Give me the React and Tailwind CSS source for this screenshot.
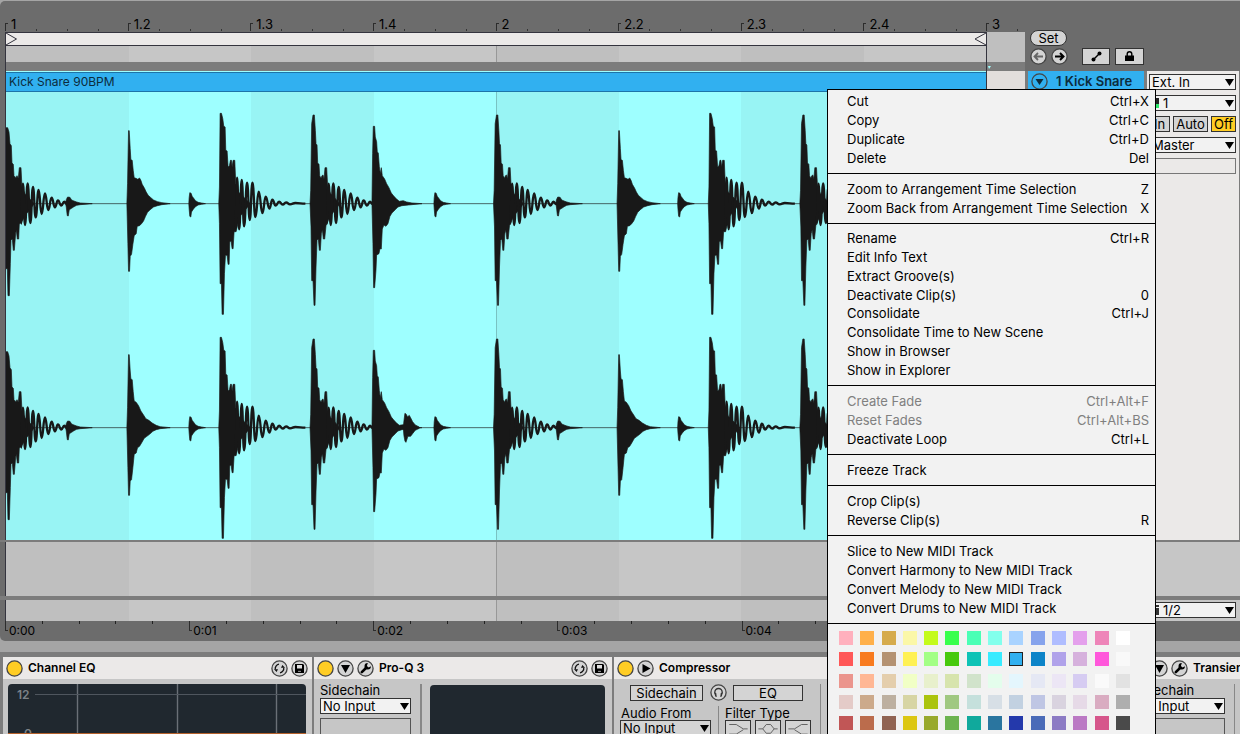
// App.jsx
import { useState } from "react";

const BEATS = ["1", "1.2", "1.3", "1.4", "2", "2.2", "2.3", "2.4"];
const SECONDS = ["0:00", "0:01", "0:02", "0:03", "0:04"];

const MENU = [
  [
    ["Cut", "Ctrl+X"],
    ["Copy", "Ctrl+C"],
    ["Duplicate", "Ctrl+D"],
    ["Delete", "Del"],
  ],
  [
    ["Zoom to Arrangement Time Selection", "Z"],
    ["Zoom Back from Arrangement Time Selection", "X"],
  ],
  [
    ["Rename", "Ctrl+R"],
    ["Edit Info Text"],
    ["Extract Groove(s)"],
    ["Deactivate Clip(s)", "0"],
    ["Consolidate", "Ctrl+J"],
    ["Consolidate Time to New Scene"],
    ["Show in Browser"],
    ["Show in Explorer"],
  ],
  [
    ["Create Fade", "Ctrl+Alt+F", true],
    ["Reset Fades", "Ctrl+Alt+BS", true],
    ["Deactivate Loop", "Ctrl+L"],
  ],
  [["Freeze Track"]],
  [["Crop Clip(s)"], ["Reverse Clip(s)", "R"]],
  [
    ["Slice to New MIDI Track"],
    ["Convert Harmony to New MIDI Track"],
    ["Convert Melody to New MIDI Track"],
    ["Convert Drums to New MIDI Track"],
  ],
];

const SWATCHES = [
  ["#ffb0bd", "#ffb04a", "#d6ab4c", "#fbf7a8", "#c4fb1c", "#38ff4c", "#4affb5", "#82ffec", "#a9d3ff", "#86a3ec", "#afbdff", "#e4a0ec", "#ee85b9", "#ffffff"],
  ["#ff5757", "#f87b1f", "#b49272", "#fff155", "#a3ff86", "#47c90d", "#0ec3b6", "#38ebff", "#31b0f0", "#0d84c8", "#b0a2ea", "#d6b1dd", "#ff58db", "#f9f9f9"],
  ["#eb958d", "#ffb794", "#e4ceac", "#f1ffc6", "#e8f0cc", "#d7e4ad", "#d1e3cb", "#e4fdec", "#e4f6fd", "#e5e8f4", "#ece6f5", "#d6ccf2", "#fafafa", "#e2e2e2"],
  ["#e4cbc8", "#ccaa8b", "#bdb0a0", "#d7d5a4", "#abc40e", "#a0c881", "#c5e0dc", "#d7dfe6", "#c2d1e1", "#bfc6e4", "#d9d3df", "#e6dae7", "#d9acc1", "#aeaeae"],
  ["#c15656", "#bb6c4c", "#906352", "#dcc712", "#98a92c", "#6cb34f", "#10a99c", "#2a759f", "#2439ab", "#4a6bb8", "#8c7bc4", "#bb79c4", "#d6568b", "#4a4a4a"],
];

// Drum shapes, three units to a pixel, y = 0 is the centre line.
// "tail" lists the turning points of the ringing after the hit.
const KICK_TAIL = [
  [50, 60], [56, -60], [62, 64], [70, -61], [78, 58], [86, -50], [94, 41], [103, -41], [112, 31], [122, -31],
  [132, 19], [142, -18], [152, 11], [161, -10], [171, 6], [180, -6], [188, 1],
];
const SHAPES = {
  kickIn: {
    body: "M3,0 L3,-228 L10,-228 L14,-215 L17,-180 L21,-174 L23,-122 L27,-118 L29,-84 L35,-78 L38,-84 L42,-76 L45,-108 L50,-108 L53,-50 L62,-30 L90,0 L62,36 L55,50 L48,60 L45,60 L43,106 L39,106 L36,80 L34,88 L30,140 L27,140 L24,106 L20,110 L18,180 L15,276 L11,276 L9,195 L3,195 Z",
    tail: KICK_TAIL,
  },
  kick: {
    body: "M0,0 L2,-40 L5,-240 L9,-266 L13,-266 L16,-220 L18,-180 L21,-176 L23,-122 L27,-118 L29,-84 L33,-76 L36,-84 L39,-86 L42,-74 L45,-108 L50,-108 L53,-50 L62,-30 L90,0 L62,36 L55,50 L48,66 L44,106 L40,106 L37,78 L34,90 L31,140 L28,140 L25,106 L21,110 L18,190 L15,305 L12,305 L9,231 L5,231 L3,70 Z",
    tail: KICK_TAIL,
  },
  lowKick: {
    body: "M0,0 L2,-50 L4,-271 L8,-271 L12,-255 L15,-232 L19,-230 L21,-160 L25,-158 L28,-110 L32,-114 L35,-130 L38,-130 L40,-110 L43,-130 L48,-130 L51,-60 L60,-34 L95,0 L62,40 L52,84 L46,84 L43,135 L40,135 L37,112 L33,114 L31,182 L28,182 L25,155 L20,155 L17,210 L14,332 L10,332 L8,240 L4,240 L2,60 Z",
    tail: [
      [50, 76], [55, -78], [61, 77], [69, -71], [76, 68], [85, -63], [93, 49], [101, -63], [110, 40], [120, -36],
      [131, 28], [141, -21], [152, 15], [161, -12], [171, 6], [181, -6], [192, 3], [202, -4], [214, 2], [230, -2], [260, 0],
    ],
  },
  snare: {
    body: "M0,0 L2,-60 L5,-219 L7,-219 L10,-165 L12,-132 L16,-130 L19,-100 L22,-78 L27,-76 L33,-73 L38,-77 L42,-70 L46,-58 L53,-46 L58,-35 L64,-25 L72,-18 L80,-11 L92,-6 L105,-3 L130,0 L105,3 L92,6 L80,10 L70,18 L62,26 L56,38 L50,52 L44,60 L38,66 L31,68 L28,90 L22,96 L18,122 L14,152 L10,158 L8,203 L5,203 L3,120 Z",
  },
  snareWide: {
    body: "M0,0 L2,-60 L5,-219 L7,-219 L10,-170 L12,-146 L16,-144 L19,-108 L22,-80 L28,-76 L35,-66 L42,-50 L50,-38 L57,-27 L66,-22 L76,-14 L88,-7 L100,-3 L130,0 L100,3 L88,6 L78,11 L68,20 L60,26 L52,32 L44,46 L38,56 L32,60 L28,76 L22,80 L18,120 L14,156 L10,160 L8,203 L5,203 L3,120 Z",
  },
  rim: {
    body: "M0,0 L2,-150 L4,-232 L8,-232 L10,-200 L14,-186 L16,-155 L19,-152 L22,-112 L25,-90 L28,-108 L31,-84 L38,-74 L44,-60 L51,-48 L58,-32 L66,-22 L74,-14 L82,-7 L94,-9 L104,-5 L120,-2 L150,0 L110,4 L90,6 L78,10 L70,18 L60,28 L54,38 L48,60 L42,68 L36,64 L31,76 L28,136 L24,135 L21,150 L14,154 L12,200 L8,252 L5,252 L3,120 Z",
  },
  hat: {
    body: "M0,0 L1,-18 L3,-33 L7,-31 L10,-22 L14,-17 L20,-9 L28,-4 L38,-2 L50,0 L38,2 L28,4 L20,9 L14,16 L8,25 L6,40 L3,38 L1,16 Z",
  },
  ghost: {
    body: "M0,0 L2,-12 L6,-20 L13,-19 L18,-11 L25,-8 L33,-5 L44,-2 L80,0 L44,3 L33,5 L25,9 L18,14 L11,18 L8,37 L5,36 L2,10 Z",
  },
  clap: {
    body: "M0,0 L2,-20 L5,-43 L9,-40 L13,-32 L18,-37 L22,-30 L28,-18 L36,-8 L48,-2 L48,2 L36,8 L28,18 L22,26 L14,26 L8,44 L5,40 L2,24 Z",
  },
};

const LEFT_CHANNEL = [
  ["kickIn", 13], ["ghost", 197], ["snare", 381], ["hat", 567], ["lowKick", 657], ["kick", 931],
  ["rim", 1117], ["hat", 1303], ["kick", 1482], ["ghost", 1669], ["snare", 1853], ["hat", 2035],
  ["lowKick", 2127], ["kick", 2402], ["rim", 2588],
];
const RIGHT_CHANNEL = [
  ["kickIn", 13], ["ghost", 197], ["snareWide", 381], ["hat", 567], ["lowKick", 657], ["kick", 931],
  ["rim", 1117], ["clap", 1211], ["hat", 1303], ["kick", 1482], ["ghost", 1669], ["snareWide", 1853],
  ["hat", 2035], ["lowKick", 2127], ["kick", 2402], ["rim", 2588],
];

// Smooth wave through the turning points
const wave = (points) =>
  points
    .map(([x, y], i) => {
      if (i === 0) return `M${x},${y}`;
      const [px, py] = points[i - 1];
      const mid = (px + x) / 2;
      return `C${mid},${py} ${mid},${y} ${x},${y}`;
    })
    .join(" ");

function Channel({ hits, y }) {
  return (
    <g transform={`translate(-18 ${y})`}>
      <path d="M18,0 H2961" stroke="#181818" strokeOpacity="0.65" strokeWidth="3" />
      {hits.map(([name, x]) => (
        <g key={x} transform={`translate(${x} 0)`}>
          <path d={SHAPES[name].body} fill="#181818" stroke="#181818" strokeWidth="2" />
          {SHAPES[name].tail && (
            <path d={wave(SHAPES[name].tail)} fill="none" stroke="#181818" strokeWidth="7" strokeLinejoin="round" />
          )}
        </g>
      ))}
    </g>
  );
}

// Alternating beat shading behind the tracks
function Bands({ even, odd }) {
  return (
    <div className="grid h-full flex-1 grid-cols-8">
      {BEATS.map((b, i) => (
        <div key={b} className={`${i % 2 ? odd : even} ${i === 4 ? "border-l border-black/20" : ""}`} />
      ))}
    </div>
  );
}

function BeatMark({ label }) {
  return (
    <div className="relative flex items-end overflow-hidden">
      <span className="h-2 w-[3px] shrink-0 border-l border-t border-[#2c2c2c]" />
      <span className="pb-px pl-[3px] text-[13px] leading-[12px]">{label}</span>
      <span className="absolute inset-x-0 bottom-0 grid h-[2px] grid-cols-[repeat(4,31px)]">
        <i /><i className="border-l border-[#333]" /><i className="border-l border-[#333]" /><i className="border-l border-[#333]" />
      </span>
    </div>
  );
}

function Select({ label, options, icon, fill = "bg-[#f2f2f2]" }) {
  return (
    <div className={`relative h-4 border border-[#333] ${fill}`}>
      {icon && <span className="absolute left-0 top-0">{icon}</span>}
      <select
        aria-label={label}
        className={`block h-full w-full appearance-none bg-transparent pr-3 text-[13px] leading-[14px] outline-none ${icon ? "pl-[13px]" : "pl-[2px]"}`}
      >
        {options.map((o) => (
          <option key={o}>{o}</option>
        ))}
      </select>
      <svg className="pointer-events-none absolute right-px top-[4px]" width="9" height="7" viewBox="0 0 9 7">
        <path d="M0 0h9L4.500 7z" fill="#000" />
      </svg>
    </div>
  );
}

function RoundButton({ label, fill = "#d4d4d4", children }) {
  return (
    <button aria-label={label} className="block size-[17px] shrink-0">
      <svg width="17" height="17" viewBox="0 0 17 17">
        <circle cx="8.500" cy="8.500" r="7.600" fill={fill} stroke="#444" strokeWidth="1.300" />
        {children}
      </svg>
    </button>
  );
}

const Power = () => <RoundButton label="Device activator" fill="#ffcd24" />;
const Unfold = () => (
  <RoundButton label="Unfold"><path d="M4 5h9l-4.500 8z" fill="#000" /></RoundButton>
);
const Play = () => (
  <RoundButton label="Toggle sidechain"><path d="M5.500 4v9l8-4.500z" fill="#000" /></RoundButton>
);
const Wrench = () => (
  <RoundButton label="Show plug-in window">
    <path d="M4.800 12.200l4.200-4.200" stroke="#000" strokeWidth="2.600" strokeLinecap="round" />
    <path d="M10.800 3.100a3.200 3.200 0 1 0 3.100 3.200l-2.300 1.200-1.700-1.600z" fill="#000" />
  </RoundButton>
);
const HotSwap = () => (
  <RoundButton label="Hot-swap preset">
    <path d="M8 4.200a4.400 4.400 0 0 0-3.700 5.200M9 12.800a4.400 4.400 0 0 0 3.700-5.200" fill="none" stroke="#111" strokeWidth="1.300" />
    <path d="M3 9.200h4L5.600 12zM14 7.800h-4L11.400 5z" fill="#111" />
  </RoundButton>
);
const Save = () => (
  <RoundButton label="Save preset">
    <path d="M4 4h8l1 1v8H4z" fill="#000" />
    <path d="M6 5h5v3.500H6z" fill="#ddd" />
    <path d="M7 10.800h3v1.200H7z" fill="#888" />
  </RoundButton>
);

function Device({ title, left, right, className, children }) {
  return (
    <section className={`flex flex-col overflow-hidden bg-[#c6c6c6] ${className}`}>
      <header className="flex h-[22px] shrink-0 items-center gap-[3px] bg-[#ebe9e8] pl-[3px] pr-1">
        {left}
        <h2 className="flex-1 whitespace-nowrap pl-[2px] text-[12px] font-semibold leading-[16px]">{title}</h2>
        {right}
      </header>
      {children}
    </section>
  );
}

function SidechainColumn() {
  return (
    <div className="w-[91px] shrink-0">
      <p className="text-[13px] leading-[15px]">Sidechain</p>
      <Select label="Sidechain" options={["No Input"]} />
      <div className="mt-1 h-10 border border-[#555]" />
    </div>
  );
}

function ContextMenu() {
  const [color, setColor] = useState("#31b0f0");
  return (
    <div role="menu" className="absolute bottom-0 right-[84px] top-[89px] w-[329px] overflow-hidden border border-b-0 border-black bg-[#f2f2f2] text-[13px]">
      {MENU.map((section, i) => (
        <div
          key={i}
          className={`flex flex-col border-b border-black pb-[6px] ${i === 0 ? "pt-px" : "pt-[5px]"} ${section.length > 4 ? "h-[162px]" : ""}`}
        >
          {section.map(([name, keys, off]) => (
            <button
              key={name}
              role="menuitem"
              disabled={off}
              className="flex min-h-0 flex-[1_1_19px] items-center justify-between pl-[19px] pr-[6px] leading-[18px] text-black hover:bg-[#ffcd24] disabled:text-[#808080]"
            >
              <span>{name}</span>
              <span>{keys}</span>
            </button>
          ))}
        </div>
      ))}
      <div className="flex h-[106px] flex-col justify-between pl-[11px] pr-[25px] pt-[7px]">
        {SWATCHES.map((row, r) => (
          <div key={r} className="flex justify-between">
            {row.map((c) => (
              <button
                key={c}
                aria-label={c}
                onClick={() => setColor(c)}
                className={`size-[14px] ${c === color ? "border border-[#222]" : ""}`}
                style={{ backgroundColor: c }}
              />
            ))}
          </div>
        ))}
      </div>
    </div>
  );
}

export default function App() {
  return (
    <div className="relative flex h-screen flex-col overflow-hidden bg-[#a5a5a5] pt-px font-['Inter',sans-serif] text-black">
      <main className="shrink-0 rounded-l-[5px] bg-[#6c6c6c]">
        {/* Beat ruler, loop brace and scrub area */}
        <div className="flex h-[70px]">
          <div className="min-w-0 flex-1 pl-[5px]">
            <div className="flex h-[31px]">
              <div className="grid flex-1 grid-cols-8 pb-px">
                {BEATS.map((b) => (
                  <BeatMark key={b} label={b} />
                ))}
              </div>
              <div className="grid w-[39px] pb-px">
                <BeatMark label="3" />
              </div>
            </div>
            <div className="flex h-[30px]">
              <div className="flex flex-1 flex-col border-x border-[#34343e]">
                <div className="flex h-[14px] justify-between border-y border-[#34343e] bg-[#ebe9e8]">
                  <svg width="12" height="12" viewBox="0 0 12 12"><path d="M0 0l10.500 6L0 12" fill="none" stroke="#34343e" /></svg>
                  <svg width="12" height="12" viewBox="0 0 12 12"><path d="M12 0L1 6l11 6" fill="none" stroke="#34343e" /></svg>
                </div>
                <div className="flex flex-1">
                  <Bands even="bg-[#bfbfbf]" odd="bg-[#c6c6c6]" />
                </div>
              </div>
              <div className="w-[38px] bg-[#bfbfbf]" />
            </div>
            <div className="flex h-[9px] border-l border-[#34343e] bg-[#7c7c7c]">
              <div className="flex-1 border-r border-[#34343e]" />
              <div className="w-[38px] pl-px pt-1">
                <svg width="3" height="3" viewBox="0 0 3 3"><path d="M0 0h3L1 3z" fill="#9effff" /></svg>
              </div>
            </div>
          </div>
          <div className="w-[215px] pl-[5px] pt-[29px]">
            <button className="block h-4 w-[37px] rounded-full border border-[#333] bg-[#d4d4d4] text-[13px] leading-[14px]">Set</button>
            <div className="mt-px flex h-[18px] items-center">
              <RoundButton label="Previous locator">
                <path d="M13 8.500H5M8 5L4.500 8.500 8 12" fill="none" stroke="#666" strokeWidth="1.800" />
              </RoundButton>
              <span className="w-1" />
              <RoundButton label="Next locator">
                <path d="M4 8.500h8M9 5l3.500 3.500L9 12" fill="none" stroke="#000" strokeWidth="2" />
              </RoundButton>
              <button aria-label="Automation mode" className="ml-[14px] flex h-[17px] w-7 items-center justify-center border border-[#333] bg-[#d4d4d4]">
                <svg width="11" height="11" viewBox="0 0 11 11">
                  <path d="M2 9L9 2" stroke="#000" strokeWidth="1.500" />
                  <circle cx="2.500" cy="8.500" r="2" />
                  <circle cx="8.500" cy="2.500" r="2" />
                </svg>
              </button>
              <button aria-label="Lock envelopes" className="ml-[5px] flex h-[17px] w-[29px] items-center justify-center border border-[#333] bg-[#d4d4d4]">
                <svg width="9" height="10" viewBox="0 0 9 10">
                  <path d="M2.200 5V3a2.300 2.300 0 0 1 4.600 0v2" fill="none" stroke="#000" strokeWidth="1.400" />
                  <path d="M0 4.500h9V10H0z" />
                </svg>
              </button>
            </div>
          </div>
        </div>

        {/* Audio track */}
        <div className="flex h-[469px]">
          <div className="flex min-w-0 flex-1 pl-[5px]">
            <div className="flex flex-1 flex-col border-x border-[#34343e]">
              <div className="border-t border-[#9effff]">
                <div className="h-5 border-y border-[#1d74a8] bg-[#31b0f0] pl-[3px] text-[12px] leading-[18px] text-[#0c2c3c]">
                  Kick Snare 90BPM
                </div>
              </div>
              <div className="relative flex flex-1">
                <Bands even="bg-[#98f4f4]" odd="bg-[#9effff]" />
                <svg className="absolute inset-0 size-full" viewBox="0 0 2943 1344" preserveAspectRatio="none">
                  <Channel hits={LEFT_CHANNEL} y={335} />
                  <Channel hits={RIGHT_CHANNEL} y={1007} />
                </svg>
              </div>
            </div>
            <div className="w-[38px] bg-[#e2dedc]" />
          </div>
          <div className="flex w-[215px] gap-[3px] border-r border-[#7c7c7c] bg-[#7c7c7c] pl-[3px]">
            <div className="w-[116px] bg-[#c6c6c6]">
              <div className="flex h-5 items-center gap-2 bg-[#31b0f0] pl-[3px] text-[#0c2c3c]">
                <RoundButton label="Fold track" fill="#31b0f0"><path d="M4.500 6h8l-4 6z" fill="#0c2c3c" /></RoundButton>
                <h1 className="whitespace-nowrap text-[13px] font-semibold leading-[16px]">1 Kick Snare</h1>
              </div>
            </div>
            <div className="flex min-w-0 flex-1 flex-col gap-[5px] bg-[#ebe9e8] pl-[2px] pr-[3px] pt-[3px]">
              <Select label="Audio from" options={["Ext. In"]} />
              <Select
                label="Input channel"
                options={["1"]}
                icon={
                  <svg width="10" height="14" viewBox="0 0 10 14">
                    <path d="M2 2h3v10H2zM6 2h3v6H6z" fill="#222" />
                    <path d="M6 8h3v4H6z" fill="#2ee66b" />
                  </svg>
                }
              />
              <div className="flex h-4 justify-between text-[13px] leading-[14px]">
                <button className="w-[21px] border border-[#333] bg-[#d4d4d4] text-center">In</button>
                <button className="w-[35px] border border-[#333] bg-[#d4d4d4] text-center">Auto</button>
                <button className="w-[25px] border border-[#333] bg-[#ffcd24] text-center">Off</button>
              </div>
              <Select label="Audio to" options={["Master"]} />
              <div className="h-4 border border-[#777]" />
            </div>
          </div>
        </div>

        {/* Drop area and master row */}
        <div className="h-[2px] bg-[#7c7c7c]" />
        <div className="flex h-[54px] pl-[5px]">
          <div className="flex flex-1 border-l border-[#34343e]"><Bands even="bg-[#bfbfbf]" odd="bg-[#c6c6c6]" /></div>
          <div className="w-[254px] bg-[#c6c6c6]" />
        </div>
        <div className="h-1 bg-[#7c7c7c]" />
        <div className="flex h-[21px] pl-[5px]">
          <div className="flex flex-1 border-l border-[#34343e]"><Bands even="bg-[#bfbfbf]" odd="bg-[#c6c6c6]" /></div>
          <div className="w-[254px] bg-[#c6c6c6] pl-[163px] pr-1 pt-[2px]">
            <Select
              label="Master output"
              options={["1/2"]}
              icon={
                <svg width="10" height="14" viewBox="0 0 10 14">
                  <path d="M1 5h3v7H1zM6 5h3v7H6zM1 2h3v2H1zM6 2h3v2H6z" fill="#333" />
                </svg>
              }
            />
          </div>
        </div>

        {/* Time ruler */}
        <div className="flex h-5 pl-[5px] pr-[253px]">
          <div className="grid flex-1 grid-cols-[repeat(16,minmax(0,1fr))]">
            {SECONDS.map((s) => (
              <div key={s} className="relative col-span-3 flex">
                <span className="h-[10px] w-[3px] border-b border-l border-[#2c2c2c]" />
                <span className="pl-px pt-[3px] text-[12px] leading-[14px]">{s}</span>
                <span className="absolute inset-x-0 top-0 grid h-[3px] grid-cols-5">
                  <i />
                  <i className="border-l border-[#222]" />
                  <i className="border-l border-[#222]" />
                  <i className="border-l border-[#222]" />
                  <i className="border-l border-[#222]" />
                </span>
              </div>
            ))}
          </div>
        </div>
      </main>

      {/* Device chain */}
      <div className="mt-[11px] flex min-h-0 flex-1 gap-[2px] bg-[#7c7c7c] pl-[3px] pt-[5px]">
        <Device title="Channel EQ" className="w-[309px]" left={<Power />} right={<><HotSwap /><Save /></>}>
          <svg className="ml-[5px] mt-[5px] shrink-0" width="298" height="60" viewBox="0 0 298 60">
            <rect width="298" height="64" rx="4" fill="#20282f" />
            <path d="M69.500 0v60M169.500 0v60M268.500 0v60" stroke="#6a7077" strokeWidth="1.400" />
            <path d="M27 10.500h271" stroke="#4f565e" />
            <text x="9" y="15" fontSize="12" fontWeight="600" fill="#7c8287">12</text>
            <text x="16" y="54" fontSize="12" fontWeight="600" fill="#7c8287">0</text>
            <path d="M0 49.500h298" stroke="#b5612c" />
          </svg>
        </Device>

        <Device
          title="Pro-Q 3"
          className="w-[298px]"
          left={<><Power /><Unfold /><Wrench /></>}
          right={<><HotSwap /><Save /></>}
        >
          <div className="flex flex-1 pl-[6px] pr-[7px] pt-[4px]">
            <SidechainColumn />
            <div className="ml-[9px] mt-px w-[2px] bg-[#888]" />
            <div className="ml-2 mt-[2px] flex-1 rounded-t-[4px] bg-[#20282f]" />
          </div>
        </Device>

        <Device title="Compressor" className="flex-1" left={<><Power /><Play /></>}>
          <div className="flex flex-1 pl-[6px] pt-[5px]">
            <div className="w-[192px]">
              <div className="flex items-center pl-[10px] text-[13px] leading-[14px]">
                <button className="h-4 w-[73px] border border-[#333] bg-[#d4d4d4]">Sidechain</button>
                <span className="w-[7px]" />
                <RoundButton label="Sidechain listen">
                  <path d="M4.800 9.500V8.200a3.700 3.700 0 0 1 7.400 0V9.500" fill="none" stroke="#333" strokeWidth="1.300" />
                  <path d="M4.200 8.500l2 .4.600 4-1.600-.4zM12.800 8.500l-2 .4-.6 4 1.600-.4z" fill="#333" />
                </RoundButton>
                <span className="w-[6px]" />
                <button className="h-4 w-[70px] border border-[#333] bg-[#d4d4d4]">EQ</button>
              </div>
              <div className="mt-[5px] flex text-[13px] leading-[14px]">
                <div className="w-[91px]">
                  <p className="pl-px">Audio From</p>
                  <Select label="Audio From" options={["No Input"]} fill="bg-[#d4d4d4]" />
                </div>
                <div className="ml-[7px] w-px bg-[#888]" />
                <div className="ml-[6px]">
                  <p>Filter Type</p>
                  <div className="flex gap-1">
                    {["M3 4h8l8 5h5M3 15h8l8-5", "M2 9h5l4-5h5l4 5h4M7 9l4 5h5l4-5", "M24 4h-7l-8 5H2M24 15h-7l-8-5"].map((d, i) => (
                      <button key={d} aria-label={`Filter ${i + 1}`} className="h-4 w-[26px] border border-[#333] bg-[#d4d4d4]">
                        <svg width="24" height="14" viewBox="0 0 26 16">
                          <path d={d} fill="none" stroke="#555" />
                        </svg>
                      </button>
                    ))}
                  </div>
                </div>
              </div>
            </div>
            <div className="ml-2 w-px bg-[#888]" />
          </div>
        </Device>

        <Device title="Transient" className="w-[112px]" left={<><Power /><Unfold /><Wrench /></>}>
          <div className="flex flex-1 pl-[6px] pt-[4px]">
            <SidechainColumn />
            <div className="ml-[9px] mt-px w-px shrink-0 bg-[#888]" />
          </div>
        </Device>
      </div>

      <ContextMenu />
    </div>
  );
}
